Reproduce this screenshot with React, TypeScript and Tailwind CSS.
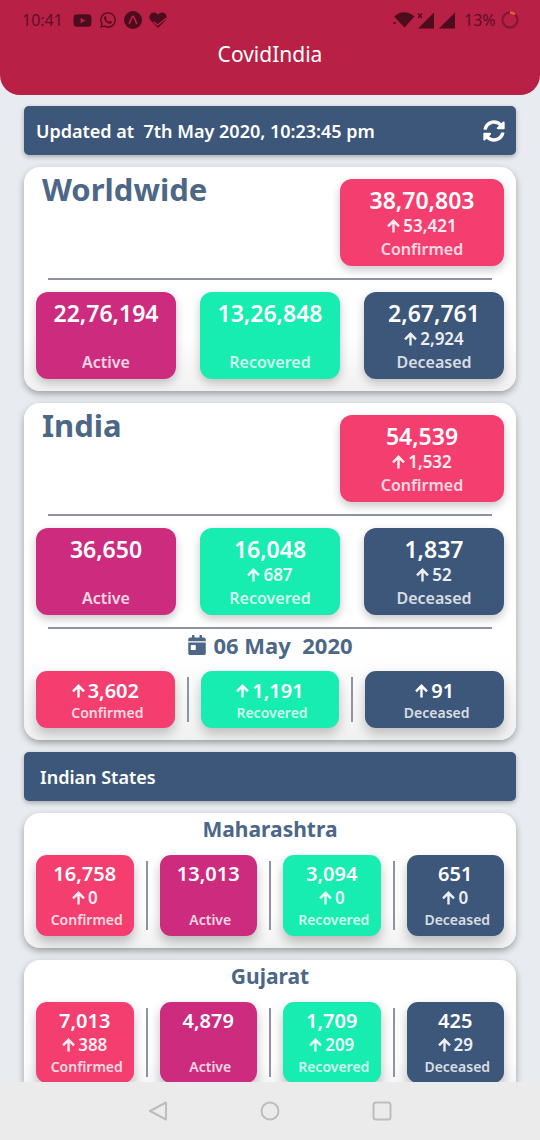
import { Fragment } from "react";
import { FaCalendarDay, FaSyncAlt, FaWhatsapp, FaYoutube } from "react-icons/fa";

type Kind = "Confirmed" | "Active" | "Recovered" | "Deceased";
type Stat = { kind: Kind; value: string; delta?: string };

const fills: Record<Kind, string> = {
  Confirmed: "bg-[#f43e6f]",
  Active: "bg-[#cd2c7e]",
  Recovered: "bg-[#17ecb1]",
  Deceased: "bg-[#3c577a]",
};

const worldwide: Stat[] = [
  { kind: "Active", value: "22,76,194" },
  { kind: "Recovered", value: "13,26,848" },
  { kind: "Deceased", value: "2,67,761", delta: "2,924" },
];

const india: Stat[] = [
  { kind: "Active", value: "36,650" },
  { kind: "Recovered", value: "16,048", delta: "687" },
  { kind: "Deceased", value: "1,837", delta: "52" },
];

const daily: Stat[] = [
  { kind: "Confirmed", value: "3,602" },
  { kind: "Recovered", value: "1,191" },
  { kind: "Deceased", value: "91" },
];

const states: { name: string; stats: Stat[] }[] = [
  {
    name: "Maharashtra",
    stats: [
      { kind: "Confirmed", value: "16,758", delta: "0" },
      { kind: "Active", value: "13,013" },
      { kind: "Recovered", value: "3,094", delta: "0" },
      { kind: "Deceased", value: "651", delta: "0" },
    ],
  },
  {
    name: "Gujarat",
    stats: [
      { kind: "Confirmed", value: "7,013", delta: "388" },
      { kind: "Active", value: "4,879" },
      { kind: "Recovered", value: "1,709", delta: "209" },
      { kind: "Deceased", value: "425", delta: "29" },
    ],
  },
];

function ArrowUp() {
  return (
    <svg viewBox="0 0 13 14" className="h-[14px] w-[13px] shrink-0" fill="none" stroke="currentColor" strokeWidth="2.4" aria-hidden="true">
      <path d="M6.5 13.5V2M1 7.3 6.5 1.8 12 7.3" />
    </svg>
  );
}

function BigTile({ stat }: { stat: Stat }) {
  return (
    <div className={`${fills[stat.kind]} flex flex-col items-center rounded-xl pt-[7px] pb-[5px] text-white shadow-[0_4px_10px_rgba(0,0,0,0.22)]`}>
      <div className="text-[23px] leading-[28px] font-semibold">{stat.value}</div>
      <div className="flex h-[23px] items-center gap-[3px] text-[17px] leading-[23px] font-semibold opacity-90">
        {stat.delta && (
          <>
            <ArrowUp />
            {stat.delta}
          </>
        )}
      </div>
      <div className="text-[16px] leading-[24px] font-semibold opacity-80">{stat.kind}</div>
    </div>
  );
}

function StateTile({ stat }: { stat: Stat }) {
  return (
    <div className={`${fills[stat.kind]} flex min-w-0 flex-1 flex-col items-center rounded-[11px] pt-[7px] pb-[6px] text-white shadow-[0_6px_12px_rgba(0,0,0,0.25)]`}>
      <div className="text-[20px] leading-[24px] font-semibold">{stat.value}</div>
      <div className="flex h-6 items-center gap-[3px] text-[17px] leading-[24px] font-semibold opacity-90">
        {stat.delta && (
          <>
            <ArrowUp />
            {stat.delta}
          </>
        )}
      </div>
      <div className="pl-1 text-[14px] leading-[20px] font-semibold opacity-80">{stat.kind}</div>
    </div>
  );
}

function DailyTile({ stat }: { stat: Stat }) {
  return (
    <div className={`${fills[stat.kind]} flex min-w-0 flex-1 flex-col items-center rounded-[11px] pt-2 pb-[5px] text-white shadow-[0_6px_12px_rgba(0,0,0,0.22)]`}>
      <div className="flex items-center gap-[3px] text-[20px] leading-[24px] font-semibold">
        <ArrowUp />
        {stat.value}
      </div>
      <div className="pl-1 text-[14px] leading-[20px] font-semibold opacity-80">{stat.kind}</div>
    </div>
  );
}

function Divider() {
  return <div className="mx-3 my-[6px] w-[2px] shrink-0 bg-[#8b93a5]" />;
}

function Rule() {
  return <hr className="mx-3 my-3 h-[2px] border-0 bg-[#8b93a5]" />;
}

const card = "rounded-2xl bg-linear-to-b from-white from-75% to-[#f1f1f1] px-3 pb-3 shadow-[0_3px_7px_rgba(0,0,0,0.32)]";
const bar = "flex h-[49px] shrink-0 items-center rounded-[5px] bg-[#3c577a] text-white shadow-[0_2px_5px_rgba(0,0,0,0.28)]";

function Region({ name, confirmed, stats, children }: { name: string; confirmed: Stat; stats: Stat[]; children?: React.ReactNode }) {
  return (
    <section className={card}>
      <div className="grid grid-cols-[2fr_1fr] pt-3">
        <h2 className="-mt-3 pt-[2px] pl-[6px] text-[31px] leading-[40px] font-bold text-[#4d6787]">{name}</h2>
        <div className="-ml-[8px]">
          <BigTile stat={confirmed} />
        </div>
      </div>
      <Rule />
      <div className="grid grid-cols-3 gap-6">
        {stats.map((s) => (
          <BigTile key={s.kind} stat={s} />
        ))}
      </div>
      {children}
    </section>
  );
}

function StatusBar() {
  return (
    <div className="flex h-10 items-center justify-between pr-[21px] pl-[22px] text-[16px] text-[#5d0f28]">
      <div className="flex items-center">
        <span className="w-[43px]">10:41</span>
        <FaYoutube className="ml-2 size-[19px] text-[#4d0c1e]" />
        <FaWhatsapp className="ml-[7px] size-[18px] text-[#4d0c1e]" />
        <svg viewBox="0 0 18 18" className="ml-[7px] size-[18px]" aria-hidden="true">
          <circle cx="9" cy="9" r="9" fill="#4d0c1e" />
          <path d="M5.4 12.4 8.1 6.2Q9 4.6 9.9 6.2L12.6 12.4" fill="none" stroke="#b82045" strokeWidth="1.7" strokeLinecap="round" />
        </svg>
        <svg viewBox="0 0 18 16" className="ml-[7px] h-4 w-[18px]" aria-hidden="true">
          <path d="M9 16 1.6 8.6C-2 4.2 2.5-1.5 7 1L9 2.6 11 1C15.5-1.5 20 4.2 16.4 8.6Z" fill="#4d0c1e" />
          <path d="M4.5 9.5 8.5 13 17.5 6" fill="none" stroke="#b82045" strokeWidth="1.4" />
        </svg>
      </div>
      <div className="flex items-center">
        <svg viewBox="0 0 22 16" className="h-4 w-[22px]" fill="#4d0c1e" aria-hidden="true">
          <path d="M1 4.5Q11-4 21.5 4.5L11.5 15.5Z" />
          <path d="M.5 10h2v2h-2z" />
        </svg>
        <svg viewBox="0 0 17 17" className="ml-[2px] size-[17px]" fill="#4d0c1e" aria-hidden="true">
          <path d="M1 16.5 17 .5V16.5Z" />
          <path d="M1 1.5 5 6M5 1.5 1 6" stroke="#4d0c1e" strokeWidth="1.3" />
        </svg>
        <svg viewBox="0 0 17 17" className="ml-1 size-[17px]" fill="#4d0c1e" aria-hidden="true">
          <path d="M1 16.5 17 .5V16.5Z" />
        </svg>
        <span className="ml-[9px] w-8">13%</span>
        <svg viewBox="0 0 18 18" className="ml-[5px] size-[18px]" fill="none" strokeWidth="2.4" aria-hidden="true">
          <circle cx="9" cy="9" r="7.5" stroke="#851837" />
          <path d="M9 1.5A7.5 7.5 0 0 1 14 3.4" stroke="#e5612f" />
        </svg>
      </div>
    </div>
  );
}

export default function App() {
  return (
    <div className="flex h-screen flex-col bg-[#e8ebf0] font-['Noto_Sans','Open_Sans',sans-serif]">
      <header className="h-[95px] shrink-0 rounded-b-[20px] bg-[#b82045]">
        <StatusBar />
        <h1 className="text-center text-[21px] leading-[28px] text-white">CovidIndia</h1>
      </header>

      <main className="flex min-h-0 flex-1 flex-col gap-3 overflow-y-auto px-6 pt-[11px] pb-3 [scrollbar-width:none]">
        <div className={`${bar} justify-between pr-[11px] pl-3`}>
          <p className="text-[18px] leading-[24px] font-semibold whitespace-pre">{"Updated at  7th May 2020, 10:23:45 pm"}</p>
          <button type="button" aria-label="Refresh">
            <FaSyncAlt className="size-[22px]" />
          </button>
        </div>

        <Region name="Worldwide" confirmed={{ kind: "Confirmed", value: "38,70,803", delta: "53,421" }} stats={worldwide} />

        <Region name="India" confirmed={{ kind: "Confirmed", value: "54,539", delta: "1,532" }} stats={india}>
          <Rule />
          <h3 className="-mt-3 mb-[10px] flex h-8 items-center justify-center gap-[6px] text-[22px] font-bold text-[#4d6787]">
            <FaCalendarDay className="size-[20px]" />
            <span className="whitespace-pre">06 May  2020</span>
          </h3>
          <div className="flex">
            {daily.map((s, i) => (
              <Fragment key={s.kind}>
                {i > 0 && <Divider />}
                <DailyTile stat={s} />
              </Fragment>
            ))}
          </div>
        </Region>

        <div className={`${bar} px-4`}>
          <h2 className="text-[18px] leading-[24px] font-semibold">Indian States</h2>
        </div>

        {states.map((state) => (
          <section key={state.name} className={card}>
            <h3 className="mb-[10px] text-center text-[21px] leading-[32px] font-bold text-[#4d6787]">{state.name}</h3>
            <div className="flex">
              {state.stats.map((s, i) => (
                <Fragment key={s.kind}>
                  {i > 0 && <Divider />}
                  <StateTile stat={s} />
                </Fragment>
              ))}
            </div>
          </section>
        ))}
      </main>

      <nav className="flex h-[58px] shrink-0 items-center justify-center gap-[92px] bg-[#ebebeb] text-[#bdbdbd]">
        <button type="button" aria-label="Back">
          <svg viewBox="0 0 20 20" className="size-5" fill="none" stroke="currentColor" strokeWidth="2" strokeLinejoin="round">
            <path d="M2 10 18 1.5V18.5Z" />
          </svg>
        </button>
        <button type="button" aria-label="Home">
          <svg viewBox="0 0 20 20" className="size-5" fill="none" stroke="currentColor" strokeWidth="2">
            <circle cx="10" cy="10" r="8.5" />
          </svg>
        </button>
        <button type="button" aria-label="Recent apps">
          <svg viewBox="0 0 20 20" className="size-5" fill="none" stroke="currentColor" strokeWidth="2">
            <rect x="1.5" y="1.5" width="17" height="17" rx="2.5" />
          </svg>
        </button>
      </nav>
    </div>
  );
}
